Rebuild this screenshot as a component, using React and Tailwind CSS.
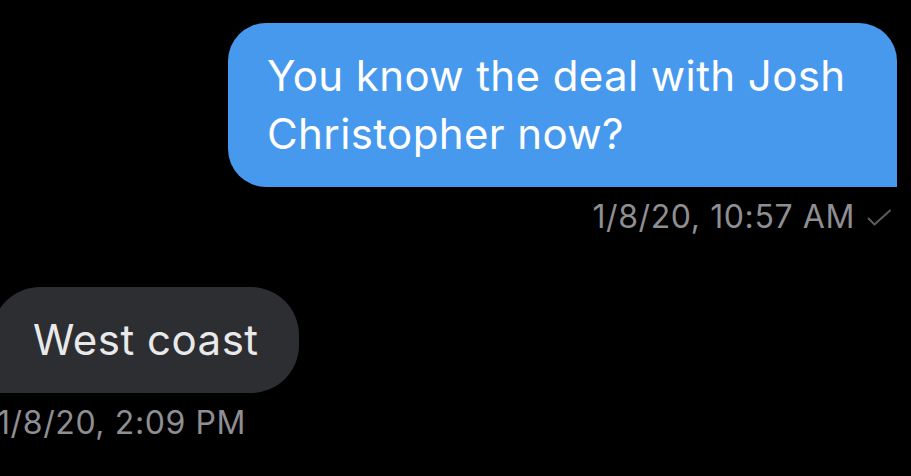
export default function App() {
  return (
    <div
      className="w-[911px] h-[476px] bg-black overflow-hidden flex flex-col"
      style={{ fontFamily: "Inter, 'Noto Sans', sans-serif" }}
    >
      <div className="mt-[23px] self-end mr-[14px] w-[669px] bg-[#4799ee] rounded-[38px] rounded-br-none pl-[39px] pr-[20px] py-[24px] text-white text-[42px] leading-[58px] tracking-[0.4px]">
        You know the deal with Josh Christopher now?
      </div>
      <div className="mt-[12px] self-end mr-[19px] flex items-center text-[#8e8e93] text-[32px] leading-[36px] tracking-[0.6px]">
        <span>1/8/20, 10:57 AM</span>
        <svg
          className="ml-[12px] mt-[2px]"
          width="25"
          height="18"
          viewBox="0 0 25 18"
          fill="none"
          stroke="#5c5c60"
          strokeWidth="2"
          strokeLinecap="round"
          strokeLinejoin="round"
        >
          <path d="M1.5 9.5 L7.5 15.5 L23 1.5" />
        </svg>
      </div>
      <div className="mt-[52px] ml-[-8px] self-start bg-[#2c2e31] rounded-[48px] rounded-bl-none pl-[41px] pr-[40px] py-[24px] text-[#e9e9ea] text-[42px] leading-[58px] tracking-[0.5px]">
        West coast
      </div>
      <div className="mt-[12px] ml-[-3px] self-start text-[#8e8e93] text-[32px] leading-[36px] tracking-[0.6px]">
        1/8/20, 2:09 PM
      </div>
    </div>
  );
}
